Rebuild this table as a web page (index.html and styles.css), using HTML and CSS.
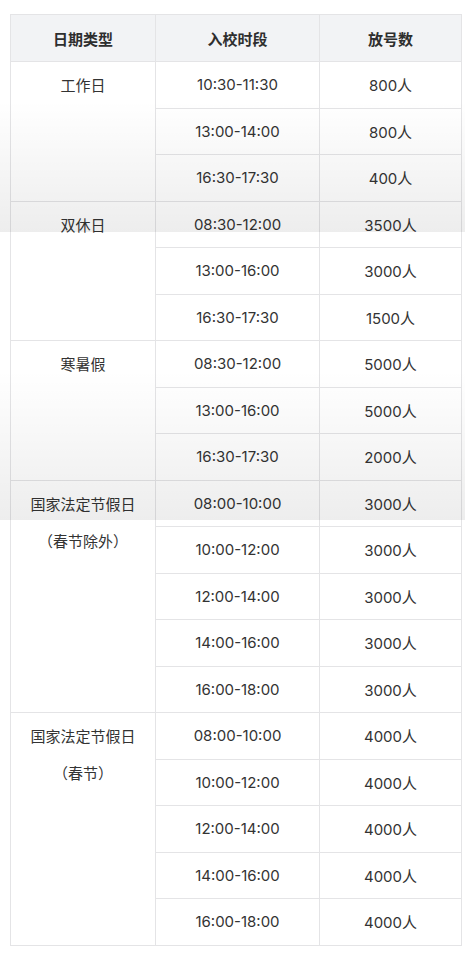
FILE: index.html
```html
<!DOCTYPE html>
<html lang="zh-CN">
<head>
<meta charset="utf-8">
<link rel="stylesheet" href="styles.css">
</head>
<body>
<div class="page">
<table class="sched">
  <colgroup><col class="c1"><col class="c2"><col class="c3"></colgroup>
  <thead>
    <tr><th>日期类型</th><th>入校时段</th><th>放号数</th></tr>
  </thead>
  <tbody>
    <tr><td class="type" rowspan="3">工作日</td><td>10:30-11:30</td><td>800人</td></tr>
    <tr><td>13:00-14:00</td><td>800人</td></tr>
    <tr><td>16:30-17:30</td><td>400人</td></tr>
    <tr><td class="type" rowspan="3">双休日</td><td>08:30-12:00</td><td>3500人</td></tr>
    <tr><td>13:00-16:00</td><td>3000人</td></tr>
    <tr><td>16:30-17:30</td><td>1500人</td></tr>
    <tr><td class="type" rowspan="3">寒暑假</td><td>08:30-12:00</td><td>5000人</td></tr>
    <tr><td>13:00-16:00</td><td>5000人</td></tr>
    <tr><td>16:30-17:30</td><td>2000人</td></tr>
    <tr><td class="type" rowspan="5">国家法定节假日<br>（春节除外）</td><td>08:00-10:00</td><td>3000人</td></tr>
    <tr><td>10:00-12:00</td><td>3000人</td></tr>
    <tr><td>12:00-14:00</td><td>3000人</td></tr>
    <tr><td>14:00-16:00</td><td>3000人</td></tr>
    <tr><td>16:00-18:00</td><td>3000人</td></tr>
    <tr><td class="type" rowspan="5">国家法定节假日<br>（春节）</td><td>08:00-10:00</td><td>4000人</td></tr>
    <tr><td>10:00-12:00</td><td>4000人</td></tr>
    <tr><td>12:00-14:00</td><td>4000人</td></tr>
    <tr><td>14:00-16:00</td><td>4000人</td></tr>
    <tr><td>16:00-18:00</td><td>4000人</td></tr>
  </tbody>
</table>
<div class="shade shade-a"></div>
<div class="shade shade-b"></div>
</div>
</body>
</html>
```
FILE: styles.css
```css
html, body {
  margin: 0;
  padding: 0;
  background: #ffffff;
}
.page {
  position: relative;
  width: 465px;
  height: 954px;
  padding: 14px 0 0 10px;
  box-sizing: border-box;
  font-family: Inter, "Noto Sans CJK SC", sans-serif;
  color: #333333;
}
.sched {
  border-collapse: collapse;
  width: 451px;
  table-layout: fixed;
  font-size: 15px;
}
.c1 { width: 145px; }
.c2 { width: 164px; }
.c3 { width: 142px; }
.sched th, .sched td {
  border: 1px solid #e4e4e6;
  text-align: center;
  padding: 0;
}
.sched th {
  height: 46px;
  background: #f2f3f5;
  font-weight: 600;
  color: #2e2e2e;
}
.sched tbody tr {
  height: 46.5px;
}
.sched td.type {
  vertical-align: top;
  line-height: 37px;
  padding-top: 5px;
}
.shade {
  position: absolute;
  left: 0;
  width: 465px;
  pointer-events: none;
}
.shade-a {
  top: 100px;
  height: 132px;
  background: linear-gradient(to bottom, rgba(0,0,0,0), rgba(0,0,0,0.07));
}
.shade-b {
  top: 370px;
  height: 150px;
  background: linear-gradient(to bottom, rgba(0,0,0,0), rgba(0,0,0,0.07));
}
```
